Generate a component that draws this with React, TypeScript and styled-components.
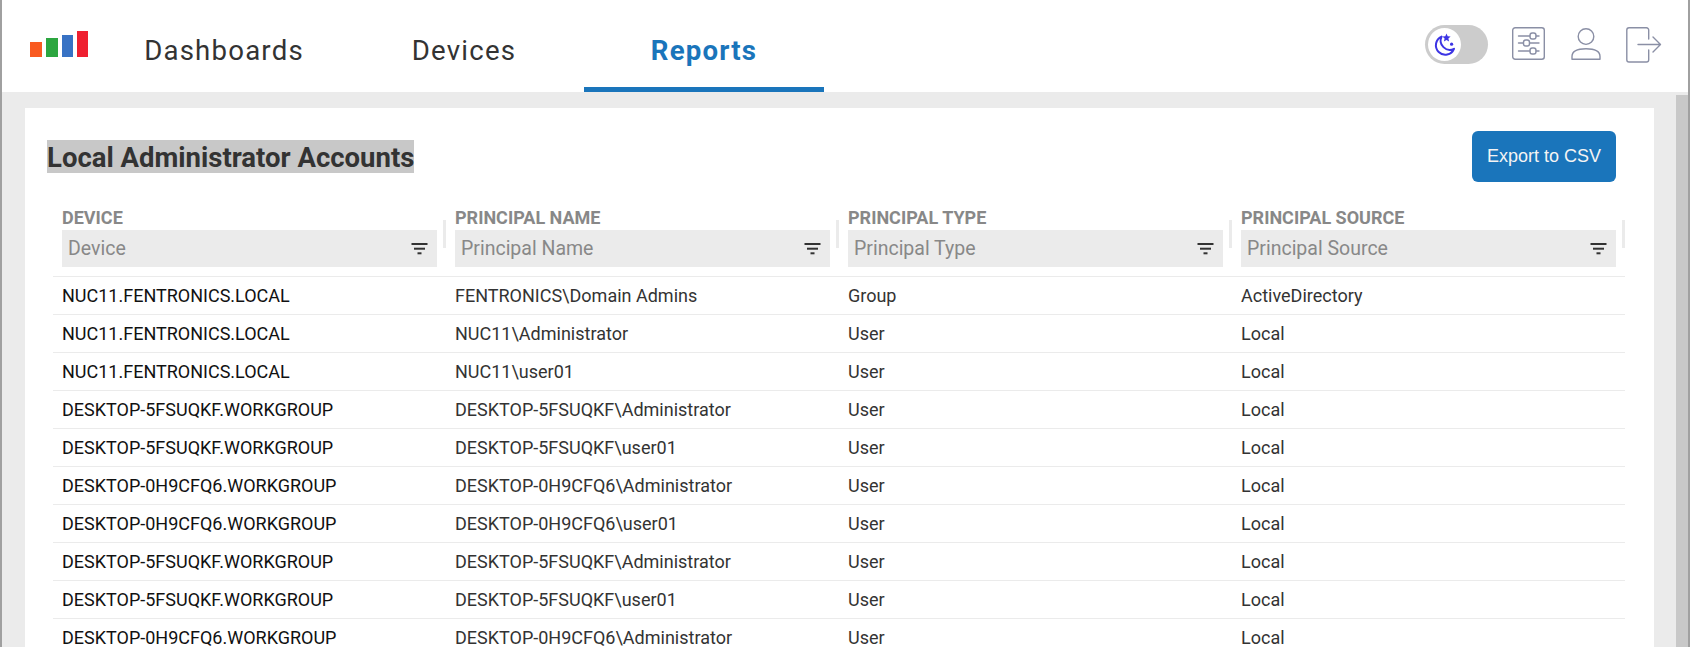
import React from 'react';
import styled, { createGlobalStyle } from 'styled-components';

const GlobalStyle = createGlobalStyle`
  html, body {
    margin: 0;
    padding: 0;
    background: #fff;
    overflow: hidden;
  }
  * { box-sizing: border-box; }
`;

const Frame = styled.div`
  position: relative;
  display: flex;
  flex-direction: column;
  width: 1690px;
  height: 647px;
  overflow: hidden;
  border-left: 2px solid #a0a0a0;
  border-right: 2px solid #a0a0a0;
  font-family: Roboto, "Liberation Sans", sans-serif;

  &::before {
    content: '';
    position: absolute;
    left: -2px;
    top: 76px;
    width: 1px;
    height: 331px;
    background: #8f5a4c;
  }
`;

const Header = styled.header`
  display: flex;
  align-items: stretch;
  flex: 0 0 92px;
  background: #fff;
`;

const Logo = styled.div`
  display: flex;
  align-items: flex-end;
  gap: 4px;
  width: 102px;
  height: 57px;
  padding-left: 28px;
`;

const LogoBar = styled.span<{ $h: number; $c: string; $w?: number }>`
  display: block;
  width: ${p => p.$w ?? 12}px;
  height: ${p => p.$h}px;
  background: ${p => p.$c};
`;

const Tabs = styled.nav`
  display: flex;
`;

const Tab = styled.a<{ $active?: boolean }>`
  display: flex;
  align-items: center;
  justify-content: center;
  width: 240px;
  height: 92px;
  padding-top: 13px;
  font-size: 27.6px;
  letter-spacing: 1.2px;
  font-weight: ${p => (p.$active ? 700 : 400)};
  color: ${p => (p.$active ? '#1a75bb' : '#333333')};
  border-bottom: 5px solid ${p => (p.$active ? '#1a75bb' : 'transparent')};
`;

const Actions = styled.div`
  display: flex;
  align-items: flex-start;
  margin-left: auto;
  padding: 25px 26px 0 0;
`;

const Toggle = styled.div`
  display: flex;
  align-items: center;
  width: 63px;
  height: 39px;
  padding-left: 3px;
  margin-right: 24px;
  border-radius: 20px;
  background: #cccccc;
`;

const Knob = styled.div`
  display: flex;
  align-items: center;
  justify-content: center;
  width: 33px;
  height: 33px;
  border-radius: 50%;
  background: #fff;
`;

const ActionIcon = styled.svg<{ $gap: number; $top: number }>`
  display: block;
  margin-right: ${p => p.$gap}px;
  margin-top: ${p => p.$top}px;
  fill: none;
  stroke: #8a8fa5;
  stroke-width: 1.4;
  stroke-linecap: round;
  stroke-linejoin: round;
`;

const Main = styled.main`
  display: flex;
  flex: 1;
  min-height: 0;
  background: #ebebeb;
`;

const Card = styled.section`
  width: 1629px;
  margin: 16px 0 0 23px;
  padding: 23px 0 0 22px;
  background: #fff;
`;

const Scrollbar = styled.div`
  width: 12px;
  margin: 3px 0 0 22px;
  background: #c8c8c8;
`;

const TitleRow = styled.div`
  display: flex;
  align-items: center;
  justify-content: space-between;
  height: 51px;
  padding-right: 38px;
`;

const Title = styled.h1`
  margin: 0;
  height: 33px;
  line-height: 35px;
  font-size: 27.5px;
  font-weight: 700;
  color: #333333;
  background: #c8c8c8;
`;

const ExportButton = styled.button`
  width: 144px;
  height: 51px;
  padding: 0;
  border: none;
  border-radius: 6px;
  background: #1a75bb;
  color: #f4f4f4;
  font-family: "Liberation Sans", Arial, sans-serif;
  font-size: 18px;
`;

const Table = styled.div`
  width: 1572px;
  margin: 26px 0 0 6px;
`;

const HeadRow = styled.div`
  display: grid;
  grid-template-columns: repeat(4, 393px);
  height: 69px;
  border-bottom: 1px solid #ebebeb;
`;

const HeadCell = styled.div`
  display: flex;
  align-items: flex-start;
  padding-left: 9px;
`;

const HeadBody = styled.div`
  width: 375px;
`;

const HeadLabel = styled.div`
  height: 22px;
  line-height: 20px;
  font-size: 18px;
  font-weight: 700;
  color: #888888;
`;

const FilterBox = styled.div`
  display: flex;
  align-items: center;
  justify-content: space-between;
  height: 37px;
  padding: 0 8px 0 6px;
  background: #ebebeb;
  font-size: 19.5px;
  color: #888888;
`;

const Separator = styled.span`
  display: block;
  width: 3px;
  height: 28px;
  margin: 12px 0 0 6px;
  background: #ebebeb;
`;

const Row = styled.div`
  display: grid;
  grid-template-columns: repeat(4, 393px);
  align-items: center;
  height: 38px;
  border-bottom: 1px solid #ebebeb;
`;

const Cell = styled.div<{ $strong?: boolean }>`
  padding-left: 9px;
  font-size: 18px;
  color: ${p => (p.$strong ? '#111111' : '#333333')};
`;

const FilterIcon = () => (
  <svg width="18" height="12" viewBox="0 0 18 12" fill="#333333" aria-hidden="true">
    <rect x="0.5" y="0" width="16" height="2" />
    <rect x="3" y="4.7" width="11" height="2" />
    <rect x="6.5" y="9.3" width="4" height="2" />
  </svg>
);

const columns = ['Device', 'Principal Name', 'Principal Type', 'Principal Source'];

const rows = [
  ['NUC11.FENTRONICS.LOCAL', 'FENTRONICS\\Domain Admins', 'Group', 'ActiveDirectory'],
  ['NUC11.FENTRONICS.LOCAL', 'NUC11\\Administrator', 'User', 'Local'],
  ['NUC11.FENTRONICS.LOCAL', 'NUC11\\user01', 'User', 'Local'],
  ['DESKTOP-5FSUQKF.WORKGROUP', 'DESKTOP-5FSUQKF\\Administrator', 'User', 'Local'],
  ['DESKTOP-5FSUQKF.WORKGROUP', 'DESKTOP-5FSUQKF\\user01', 'User', 'Local'],
  ['DESKTOP-0H9CFQ6.WORKGROUP', 'DESKTOP-0H9CFQ6\\Administrator', 'User', 'Local'],
  ['DESKTOP-0H9CFQ6.WORKGROUP', 'DESKTOP-0H9CFQ6\\user01', 'User', 'Local'],
  ['DESKTOP-5FSUQKF.WORKGROUP', 'DESKTOP-5FSUQKF\\Administrator', 'User', 'Local'],
  ['DESKTOP-5FSUQKF.WORKGROUP', 'DESKTOP-5FSUQKF\\user01', 'User', 'Local'],
  ['DESKTOP-0H9CFQ6.WORKGROUP', 'DESKTOP-0H9CFQ6\\Administrator', 'User', 'Local'],
];

const App: React.FC = () => (
  <>
    <GlobalStyle />
    <Frame>
      <Header>
        <Logo>
          <LogoBar $h={15} $c="#f95a20" />
          <LogoBar $h={19} $c="#2ca640" />
          <LogoBar $h={22} $c="#3872c4" $w={11} />
          <LogoBar $h={26} $c="#ef2030" $w={11} />
        </Logo>
        <Tabs>
          <Tab>Dashboards</Tab>
          <Tab>Devices</Tab>
          <Tab $active>Reports</Tab>
        </Tabs>
        <Actions>
          <Toggle>
            <Knob>
              <svg width="24" height="24" viewBox="0 0 24 24" aria-hidden="true">
                <path
                  d="M8.6 3.6A9.4 9.4 0 1 0 21 15.8 9.2 9.2 0 0 1 8.6 3.6Z"
                  fill="none"
                  stroke="#3c34e4"
                  strokeWidth="2"
                  strokeLinejoin="round"
                />
                <path d="M13.5 0.6l1.2 2.7 2.9.3-2.2 1.9.7 2.9-2.6-1.5-2.6 1.5.7-2.9-2.2-1.9 2.9-.3Z" fill="#3c34e4" />
                <circle cx="18.6" cy="11.2" r="1.6" fill="#3c34e4" />
              </svg>
            </Knob>
          </Toggle>
          <ActionIcon $gap={26} $top={2} width="33" height="33" viewBox="0 0 33 33">
            <rect x="0.7" y="0.7" width="31.6" height="31.6" rx="2.5" />
            <path d="M6.5 9H18M24 9H27M6.5 16H11.5M17.5 16H27M6.5 24H18M24 24H27" />
            <rect x="18" y="6" width="6" height="6" rx="2.2" />
            <rect x="11.5" y="13" width="6" height="6" rx="2.2" />
            <rect x="18" y="21" width="6" height="6" rx="2.2" />
          </ActionIcon>
          <ActionIcon $gap={25} $top={3} width="30" height="32" viewBox="0 0 30 32">
            <circle cx="15" cy="8.6" r="7.8" />
            <path d="M1 31.3V28.5C1 23.5 6.5 20.7 15 20.7S29 23.5 29 28.5V31.3Z" />
          </ActionIcon>
          <ActionIcon $gap={0} $top={2} width="36" height="36" viewBox="0 0 36 36">
            <path d="M22.7 12V3A2.2 2.2 0 0 0 20.5 0.8H3A2.2 2.2 0 0 0 0.8 3V32.8A2.2 2.2 0 0 0 3 35H20.5A2.2 2.2 0 0 0 22.7 32.8V23" />
            <path d="M12 17.5H34.5M27 10L34.5 17.5L27 25" />
          </ActionIcon>
        </Actions>
      </Header>
      <Main>
        <Card>
          <TitleRow>
            <Title>Local Administrator Accounts</Title>
            <ExportButton>Export to CSV</ExportButton>
          </TitleRow>
          <Table>
            <HeadRow>
              {columns.map(name => (
                <HeadCell key={name}>
                  <HeadBody>
                    <HeadLabel>{name.toUpperCase()}</HeadLabel>
                    <FilterBox>
                      {name}
                      <FilterIcon />
                    </FilterBox>
                  </HeadBody>
                  <Separator />
                </HeadCell>
              ))}
            </HeadRow>
            {rows.map((row, i) => (
              <Row key={i}>
                {row.map((value, j) => (
                  <Cell key={j} $strong={j === 0}>
                    {value}
                  </Cell>
                ))}
              </Row>
            ))}
          </Table>
        </Card>
        <Scrollbar />
      </Main>
    </Frame>
  </>
);

export default App;
